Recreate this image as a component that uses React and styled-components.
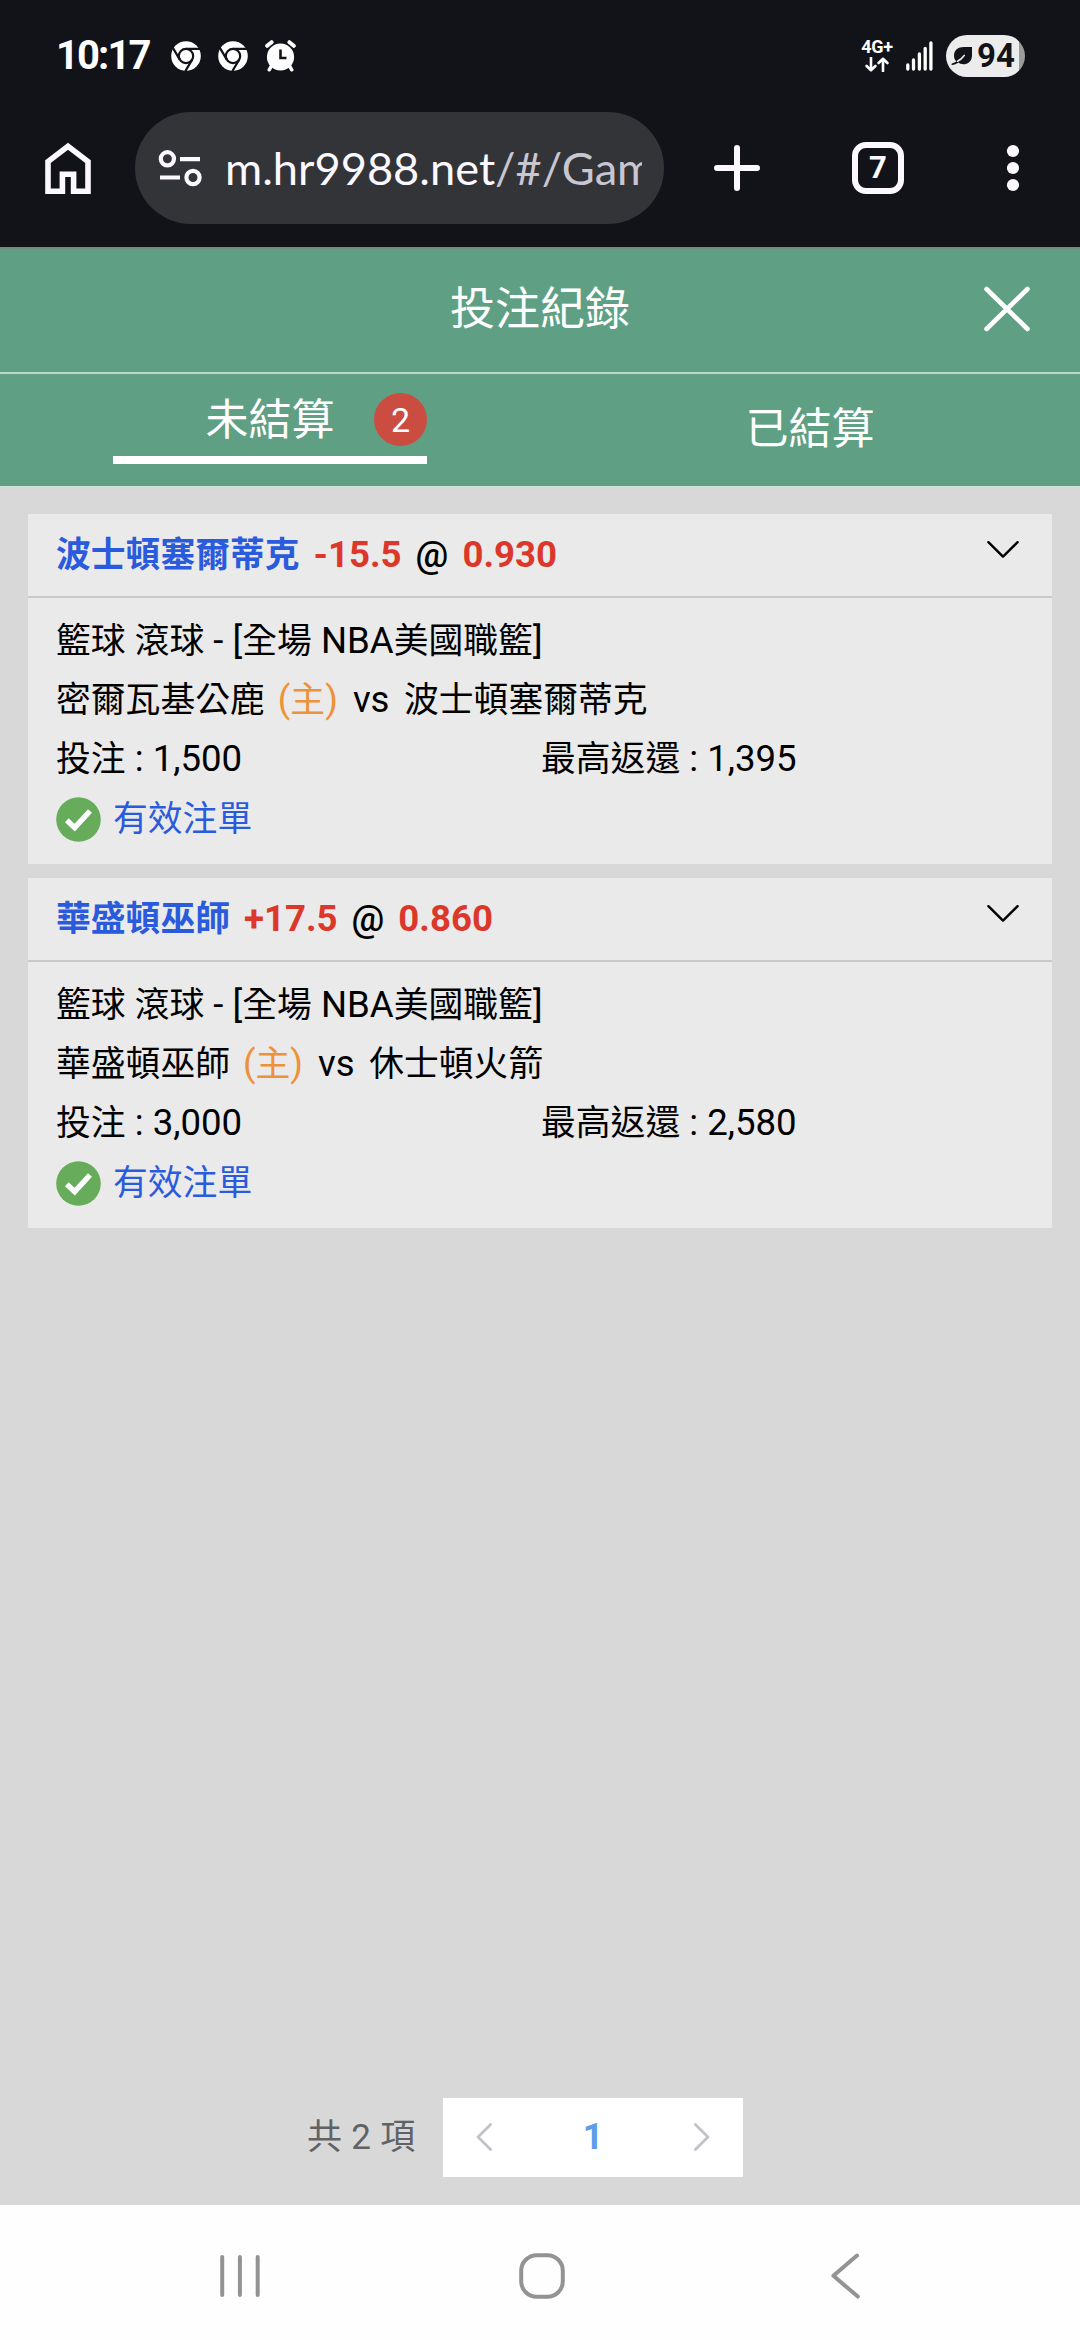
import React from "react";
import styled, { createGlobalStyle } from "styled-components";

const GlobalStyle = createGlobalStyle`
  *, *::before, *::after { box-sizing: border-box; }
  body {
    margin: 0;
    background: #d8d8d8;
    font-family: Roboto, "Noto Sans CJK TC", sans-serif;
  }
  svg { display: block; flex: none; }
`;

const Screen = styled.div`
  display: flex;
  flex-direction: column;
  width: 1080px;
  height: 2340px;
  overflow: hidden;
  background: #d8d8d8;
`;

/* ---------- status bar ---------- */
const StatusBar = styled.div`
  display: flex;
  align-items: center;
  justify-content: space-between;
  height: 111px;
  padding: 0 55px 0 56px;
  background: #121318;
  color: #fff;
`;

const StatusGroup = styled.div`
  display: flex;
  align-items: center;
`;

const Clock = styled.span`
  width: 115px;
  font-size: 40px;
  font-weight: 700;
  line-height: 48px;
  letter-spacing: -1.9px;
`;

const NoticeIcons = styled.div`
  display: flex;
  align-items: center;
  gap: 17px;
`;

const Network = styled.div`
  display: flex;
  flex-direction: column;
  align-items: center;
  gap: 3px;
  width: 34px;
  margin-right: 12px;
  font-size: 18px;
  font-weight: 700;
  line-height: 14px;
  letter-spacing: -0.3px;
`;

const Battery = styled.div`
  display: flex;
  align-items: center;
  gap: 4px;
  width: 79px;
  height: 42px;
  margin-left: 13px;
  padding-left: 5px;
  border-radius: 21px;
  background: linear-gradient(to right, #ececec 73px, #9b9b9b 73px);
  color: #121318;
  font-size: 33px;
  font-weight: 700;
  line-height: 42px;
`;

/* ---------- browser toolbar ---------- */
const Toolbar = styled.div`
  display: flex;
  align-items: center;
  height: 136px;
  padding: 1px 60px 23px 44px;
  background: #121318;
`;

const UrlPill = styled.div`
  display: flex;
  align-items: center;
  width: 529px;
  height: 112px;
  margin-left: 43px;
  padding: 0 22px 0 23px;
  border-radius: 56px;
  background: #333438;
`;

const UrlText = styled.div`
  flex: 1;
  margin-left: 23px;
  overflow: hidden;
  white-space: nowrap;
  font-family: Lato, Roboto, sans-serif;
  font-size: 45.2px;
  line-height: 60px;
  color: #fbf9ff;
`;

const UrlPath = styled.span`
  color: #c8c6d0;
`;

const ToolbarActions = styled.div`
  display: flex;
  flex: 1;
  align-items: center;
  padding-left: 49px;
`;

const TabCount = styled.div`
  display: flex;
  align-items: center;
  justify-content: center;
  width: 52px;
  height: 52px;
  margin: 0 auto 0 91px;
  border: 6px solid #fbf9ff;
  border-radius: 14px;
  color: #fbf9ff;
  font-size: 31px;
  font-weight: 700;
  line-height: 40px;
`;

/* ---------- page header ---------- */
const PageHeader = styled.header`
  display: grid;
  grid-template-columns: 1fr auto 1fr;
  align-items: center;
  height: 127px;
  padding: 0 48px 4px;
  border-top: 2px solid #748b82;
  border-bottom: 2px solid #bcd8ca;
  background: #5fa084;
  color: #fff;
`;

const Title = styled.h1`
  grid-column: 2;
  margin: 0;
  padding-top: 2px;
  font-size: 45px;
  font-weight: 400;
  line-height: 60px;
`;

const CloseButton = styled.button`
  justify-self: end;
  padding: 0;
  border: 0;
  background: none;
  color: #fff;
`;

const Tabs = styled.nav`
  display: grid;
  grid-template-columns: 1fr 1fr;
  height: 113px;
  border-bottom: 1px solid #cfe5da;
  background: #5fa084;
  color: #fff;
`;

const Tab = styled.div`
  display: flex;
  align-items: ${(p) => (p.$active ? "flex-start" : "center")};
  justify-content: center;
  padding: ${(p) => (p.$active ? "15px 0 0" : "0 0 2px")};
  font-size: 43px;
  line-height: 60px;
`;

const ActiveLabel = styled.div`
  display: grid;
  grid-template-columns: 1fr auto 1fr;
  align-items: center;
  width: 314px;
  height: 75px;
  padding-bottom: 6px;
  border-bottom: 8px solid #fff;
`;

const TabText = styled.span`
  grid-column: 2;
`;

const Badge = styled.span`
  justify-self: end;
  width: 53px;
  height: 53px;
  border-radius: 50%;
  background: #cb4d42;
  font-size: 34px;
  line-height: 54px;
  text-align: center;
`;

/* ---------- bets ---------- */
const BetList = styled.main`
  display: flex;
  flex: 1;
  flex-direction: column;
  gap: 14px;
  padding: 27px 28px 0;
`;

const Card = styled.section`
  height: 350px;
  background: #eaeaea;
  color: #000;
  font-size: 34.8px;
`;

const CardHead = styled.div`
  display: flex;
  align-items: center;
  height: 84px;
  padding: 0 33px 0 28px;
  border-bottom: 2px solid #c9c9c9;
  font-weight: 700;
  line-height: 50px;
`;

const Pick = styled.div`
  display: flex;
  align-items: baseline;
  flex: 1;
  gap: 14px;
`;

const PickTeam = styled.span`
  color: #2a5bdc;
`;

const PickValue = styled.span`
  color: #dc372b;
  font-size: 36.6px;
`;

const At = styled.span`
  font-size: 36.6px;
  font-weight: 500;
`;

const ChevronSlot = styled.div`
  padding-bottom: 11px;
`;

const CardBody = styled.div`
  padding: 13px 28px 0;
`;

const Line = styled.div`
  height: 59px;
  line-height: 59px;
  white-space: pre;
`;

const Latin = styled.span`
  font-size: 36.6px;
`;

const Amounts = styled(Line)`
  display: grid;
  grid-template-columns: 485px 1fr;
`;

const Home = styled.span`
  margin: 0 15px 0 13px;
  color: #ee9138;
`;

const Away = styled.span`
  margin-left: 14.5px;
`;

const Status = styled(Line)`
  display: flex;
  align-items: center;
  gap: 12px;
  height: 62px;
  color: #2a5bdc;
`;

/* ---------- pagination ---------- */
const Pagination = styled.div`
  display: flex;
  align-items: center;
  gap: 28px;
  height: 79px;
  margin: 0 0 28px 307px;
  font-size: 35px;
  color: #606266;
`;

const Total = styled.span`
  width: 108px;
  line-height: 50px;
  word-spacing: 0.6px;
  white-space: nowrap;
`;

const Pager = styled.div`
  display: flex;
  align-items: center;
  justify-content: space-between;
  width: 300px;
  height: 79px;
  padding: 0 32px 2px;
  background: #fff;
`;

const CurrentPage = styled.span`
  color: #609bec;
  font-size: 36px;
  font-weight: 700;
`;

/* ---------- system navigation ---------- */
const SystemNav = styled.div`
  display: grid;
  grid-template-columns: 42px 48px 30px;
  column-gap: 257px;
  align-items: center;
  height: 135px;
  padding: 7px 0 0 219px;
  background: #fefefe;
`;

const BackKey = styled.div`
  padding-left: 7px;
`;

function ChromeIcon() {
  return (
    <svg width="30" height="30" viewBox="0 0 30 30">
      <circle cx="15" cy="15" r="14.8" fill="#fff" />
      <g fill="none" stroke="#121318" strokeWidth="2.2">
        <circle cx="15" cy="15" r="7.2" />
        <path d="M15 7.8H29M8.8 18.6L1.6 6.4M21.2 18.6L14.4 30" />
      </g>
    </svg>
  );
}

function AlarmIcon() {
  return (
    <svg width="31" height="32" viewBox="0 0 31 32">
      <g stroke="#fff" strokeLinecap="round" fill="none">
        <path d="M2.2 5.8L6.6 2.2M28.8 5.8L24.4 2.2" strokeWidth="4" />
        <path d="M6.5 26L4.2 29.8M24.5 26L26.8 29.8" strokeWidth="3.4" />
      </g>
      <circle cx="15.5" cy="17" r="13.6" fill="#fff" />
      <path d="M15.5 9.5V18H21.5" fill="none" stroke="#121318" strokeWidth="2.6" />
    </svg>
  );
}

function DataArrows() {
  return (
    <svg width="24" height="15" viewBox="0 0 24 15">
      <path
        d="M6 0.8V13M1.6 9L6 13.2L10.4 9M18 14.2V2M13.6 6L18 1.8L22.4 6"
        fill="none"
        stroke="#fff"
        strokeWidth="2.6"
        strokeLinecap="round"
        strokeLinejoin="round"
      />
    </svg>
  );
}

function SignalIcon() {
  return (
    <svg width="27" height="30" viewBox="0 0 27 30">
      <path
        d="M1.8 24V28M7.5 19V28M13.4 13V28M19.2 7.5V28M24.9 2V28"
        stroke="#fff"
        strokeWidth="3.3"
        strokeLinecap="round"
      />
    </svg>
  );
}

function LeafIcon() {
  return (
    <svg width="22" height="20" viewBox="0 0 22 20">
      <path
        d="M21 1V9C21 15.5 17 18.3 12.4 18.3C10 18.3 8.5 17.6 7.5 16.6C5.5 18 3.2 18.9 1 19C0.3 18.9 0.2 18 1 17.5C2.8 17 4.4 16.2 5.3 15.2C3.6 13.5 3 11.8 3 10C3 4 7 1 13 1Z"
        fill="#121318"
      />
      <path d="M6.5 15.2C9.8 13.8 11.4 11.8 13.2 9.4" fill="none" stroke="#ececec" strokeWidth="1.6" strokeLinecap="round" />
    </svg>
  );
}

function HomeIcon() {
  return (
    <svg width="48" height="54" viewBox="0 0 48 54">
      <path
        d="M4 50.2V20.6L24 5.2L44 20.6V50.2H29.6V33.2H18.4V50.2Z"
        fill="none"
        stroke="#fbf9ff"
        strokeWidth="5.6"
      />
    </svg>
  );
}

function SiteControlsIcon() {
  return (
    <svg width="44" height="38" viewBox="0 0 44 38">
      <g fill="none" stroke="#fbf9ff" strokeWidth="4.2">
        <circle cx="9.4" cy="9.8" r="6.6" />
        <circle cx="35" cy="28.5" r="6.6" />
        <path d="M22 10.1H42M2 28.5H22" />
      </g>
    </svg>
  );
}

function PlusIcon() {
  return (
    <svg width="48" height="48" viewBox="0 0 48 48">
      <path d="M24 4V44M4 24H44" stroke="#fbf9ff" strokeWidth="6" strokeLinecap="round" />
    </svg>
  );
}

function MoreIcon() {
  return (
    <svg width="14" height="48" viewBox="0 0 14 48" fill="#fbf9ff">
      <circle cx="7" cy="7" r="6.1" />
      <circle cx="7" cy="24" r="6.1" />
      <circle cx="7" cy="41" r="6.1" />
    </svg>
  );
}

function CloseIcon() {
  return (
    <svg width="50" height="48" viewBox="0 0 50 48">
      <path d="M4.5 4L45.5 44M45.5 4L4.5 44" stroke="currentColor" strokeWidth="4.6" strokeLinecap="round" />
    </svg>
  );
}

function ChevronDown() {
  return (
    <svg width="32" height="20" viewBox="0 0 32 20">
      <path
        d="M1.4 2.2L16 16.6L30.6 2.2"
        fill="none"
        stroke="#000"
        strokeWidth="2.4"
        strokeLinecap="round"
        strokeLinejoin="round"
      />
    </svg>
  );
}

function CheckIcon() {
  return (
    <svg width="45" height="45" viewBox="0 0 45 45">
      <circle cx="22.5" cy="22.5" r="22.3" fill="#67ac5b" />
      <path d="M10.8 23.2L18.7 30.6L34 14" fill="none" stroke="#fff" strokeWidth="5.4" />
    </svg>
  );
}

function PageArrow({ d }) {
  return (
    <svg width="18" height="30" viewBox="0 0 18 30">
      <path d={d} fill="none" stroke="#c0c2ca" strokeWidth="2.8" strokeLinecap="round" strokeLinejoin="round" />
    </svg>
  );
}

function RecentsIcon() {
  return (
    <svg width="42" height="46" viewBox="0 0 42 46">
      <path d="M3.2 4V42M20.9 4V42M38.7 4V42" stroke="#939393" strokeWidth="4" strokeLinecap="round" />
    </svg>
  );
}

function HomeKeyIcon() {
  return (
    <svg width="48" height="48" viewBox="0 0 48 48">
      <rect x="3.2" y="3.2" width="41.6" height="41.6" rx="15.5" fill="none" stroke="#939393" strokeWidth="4" />
    </svg>
  );
}

function BackIcon() {
  return (
    <svg width="32" height="48" viewBox="0 0 32 48">
      <path
        d="M27 3.6L3.4 23.8L27.8 44.6"
        fill="none"
        stroke="#939393"
        strokeWidth="4"
        strokeLinecap="round"
        strokeLinejoin="round"
      />
    </svg>
  );
}

const bets = [
  {
    pick: "波士頓塞爾蒂克",
    spread: "-15.5",
    odds: "0.930",
    home: "密爾瓦基公鹿",
    away: "波士頓塞爾蒂克",
    stake: "1,500",
    payout: "1,395",
  },
  {
    pick: "華盛頓巫師",
    spread: "+17.5",
    odds: "0.860",
    home: "華盛頓巫師",
    away: "休士頓火箭",
    stake: "3,000",
    payout: "2,580",
  },
];

function BetCard({ bet }) {
  return (
    <Card>
      <CardHead>
        <Pick>
          <PickTeam>{bet.pick}</PickTeam>
          <PickValue>{bet.spread}</PickValue>
          <At>@</At>
          <PickValue>{bet.odds}</PickValue>
        </Pick>
        <ChevronSlot>
          <ChevronDown />
        </ChevronSlot>
      </CardHead>
      <CardBody>
        <Line>
          籃球<Latin> </Latin>滾球<Latin> - [</Latin>全場<Latin> NBA</Latin>美國職籃<Latin>]</Latin>
        </Line>
        <Line>
          <span>{bet.home}</span>
          <Home>
            <Latin>(</Latin>主<Latin>)</Latin>
          </Home>
          <Latin>vs</Latin>
          <Away>{bet.away}</Away>
        </Line>
        <Amounts>
          <span>
            投注<Latin> : {bet.stake}</Latin>
          </span>
          <span>
            最高返還<Latin> : {bet.payout}</Latin>
          </span>
        </Amounts>
        <Status>
          <CheckIcon />
          <span>有效注單</span>
        </Status>
      </CardBody>
    </Card>
  );
}

export default function App() {
  return (
    <Screen lang="zh-Hant">
      <GlobalStyle />
      <StatusBar>
        <StatusGroup>
          <Clock>10:17</Clock>
          <NoticeIcons>
            <ChromeIcon />
            <ChromeIcon />
            <AlarmIcon />
          </NoticeIcons>
        </StatusGroup>
        <StatusGroup>
          <Network>
            4G+
            <DataArrows />
          </Network>
          <SignalIcon />
          <Battery>
            <LeafIcon />
            94
          </Battery>
        </StatusGroup>
      </StatusBar>
      <Toolbar>
        <HomeIcon />
        <UrlPill>
          <SiteControlsIcon />
          <UrlText>
            m.hr9988.net<UrlPath>/#/Game</UrlPath>
          </UrlText>
        </UrlPill>
        <ToolbarActions>
          <PlusIcon />
          <TabCount>7</TabCount>
          <MoreIcon />
        </ToolbarActions>
      </Toolbar>
      <PageHeader>
        <Title>投注紀錄</Title>
        <CloseButton>
          <CloseIcon />
        </CloseButton>
      </PageHeader>
      <Tabs>
        <Tab $active>
          <ActiveLabel>
            <TabText>未結算</TabText>
            <Badge>2</Badge>
          </ActiveLabel>
        </Tab>
        <Tab>已結算</Tab>
      </Tabs>
      <BetList>
        {bets.map((bet) => (
          <BetCard key={bet.pick} bet={bet} />
        ))}
      </BetList>
      <Pagination>
        <Total>共 2 項</Total>
        <Pager>
          <PageArrow d="M15.6 2.6L3 15L15.6 27.4" />
          <CurrentPage>1</CurrentPage>
          <PageArrow d="M2.4 2.6L15 15L2.4 27.4" />
        </Pager>
      </Pagination>
      <SystemNav>
        <RecentsIcon />
        <HomeKeyIcon />
        <BackKey>
          <BackIcon />
        </BackKey>
      </SystemNav>
    </Screen>
  );
}
